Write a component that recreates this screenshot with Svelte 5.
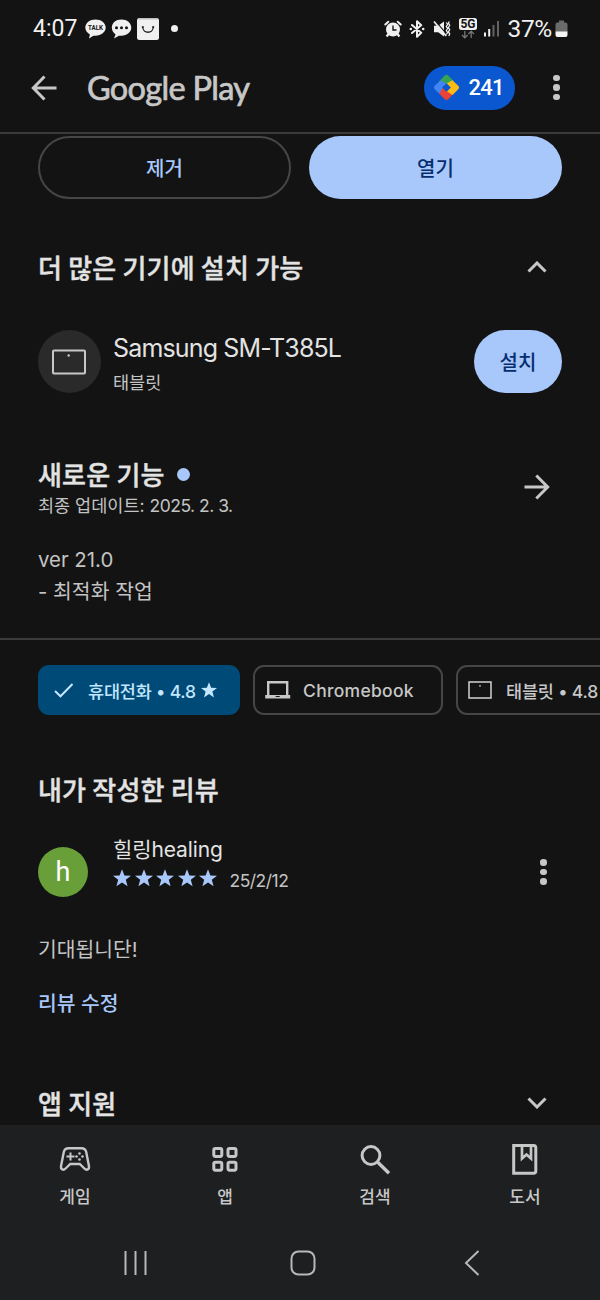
<script lang="ts">
  type Chip = { icon: 'check' | 'laptop' | 'tablet'; label: string; star: boolean; active: boolean };

  const chips: Chip[] = [
    { icon: 'check', label: '휴대전화 • 4.8', star: true, active: true },
    { icon: 'laptop', label: 'Chromebook', star: false, active: false },
    { icon: 'tablet', label: '태블릿 • 4.8', star: true, active: false },
  ];

  const tabs = [
    { id: 'games', label: '게임' },
    { id: 'apps', label: '앱' },
    { id: 'search', label: '검색' },
    { id: 'books', label: '도서' },
  ];

  const starPath = 'M9 0.2 L11.4 6.4 L18 6.7 L12.8 10.8 L14.6 17.3 L9 13.6 L3.4 17.3 L5.2 10.8 L0 6.7 L6.6 6.4 Z';

  const rating = 5;
</script>

<div class="screen">
  <header class="status-bar">
    <span class="clock">4:07</span>
    <svg class="talk" width="21" height="20" viewBox="0 0 21 20">
      <path d="M10.5 0.5C4.8 0.5 0.3 4 0.3 8.6c0 2.9 1.8 5.4 4.6 6.8l-.9 4 4.4-2.7c.7.1 1.4.1 2.1.1 5.7 0 10.2-3.6 10.2-8.2S16.2.5 10.5.5z" fill="#f0f0f0" />
      <text x="10.5" y="11.3" text-anchor="middle" textLength="15" lengthAdjust="spacingAndGlyphs">TALK</text>
    </svg>
    <svg class="dots" width="21" height="20" viewBox="0 0 21 20">
      <path d="M10.5 0.5C4.8 0.5 0.8 4 0.8 8.6c0 2.9 1.5 5.4 3.8 6.8l-1.7 4 5.1-2.7c.8.1 1.6.1 2.5.1 5.5 0 9.8-3.6 9.8-8.2S16 .5 10.5.5z" fill="#f0f0f0" />
      <circle cx="5.5" cy="8.8" r="1.5" fill="#141414" />
      <circle cx="10.5" cy="8.8" r="1.5" fill="#141414" />
      <circle cx="15.5" cy="8.8" r="1.5" fill="#141414" />
    </svg>
    <svg class="bag" width="22" height="22" viewBox="0 0 22 22">
      <rect width="22" height="22" rx="2.5" fill="#f0f0f0" />
      <rect x="1" width="20" height="1.5" fill="#bdbdbd" />
      <path d="M5.8 9c0 7 10.400 7 10.400 0" fill="none" stroke="#222" stroke-width="1.3" />
      <circle cx="5.8" cy="9" r="1.1" fill="#222" />
      <circle cx="16.2" cy="9" r="1.1" fill="#222" />
    </svg>
    <span class="more-dot"></span>

    <div class="status-right">
      <svg class="alarm" width="18" height="18" viewBox="0 0 18 18">
        <circle cx="9" cy="9.5" r="7" fill="#f0f0f0" />
        <path d="M1.3 4.5 4.3 1.8M16.700 4.5 13.700 1.8" stroke="#f0f0f0" stroke-width="2" stroke-linecap="round" />
        <path d="M4.5 14 2.6 16.500M13.500 14l1.900 2.500" stroke="#f0f0f0" stroke-width="2.200" />
        <path d="M9 5.500v4.500h3.500" fill="none" stroke="#141414" stroke-width="1.400" />
      </svg>
      <svg class="bluetooth" width="16" height="18" viewBox="0 0 16 18">
        <path d="M3 5 12.200 12.700 8 16.800V1.200l4.200 4.100L3 13" fill="none" stroke="#f0f0f0" stroke-width="2" stroke-linejoin="round" stroke-linecap="round" />
        <circle cx="1.800" cy="9" r="1.300" fill="#f0f0f0" />
        <circle cx="14.200" cy="9" r="1.300" fill="#f0f0f0" />
      </svg>
      <svg class="muted" width="18" height="18" viewBox="0 0 18 18">
        <path d="M1 5.800h4.200L11 1.500v15L5.200 12.300H1z" fill="#f0f0f0" />
        <path d="M2.500 1.200 14 14.600" stroke="#141414" stroke-width="1.200" />
        <path d="M1 1.500 13.200 16" stroke="#f0f0f0" stroke-width="1.700" />
        <path d="M13.300 2.500l1.300 2-1.300 2 1.300 2-1.300 2 1.300 2-1.300 2M16.300 1.500l-.9 1.500 1.300 2.300-1.300 2.200 1.300 2.200-1.300 2.200 1.300 2-.9 2" fill="none" stroke="#f0f0f0" stroke-width="1.300" />
      </svg>
      <svg class="five-g" width="18" height="21" viewBox="0 0 18 21">
        <rect width="18" height="12" rx="2.500" fill="#f0f0f0" />
        <text x="9" y="10" text-anchor="middle">5G</text>
        <path d="M5.800 13v6.500M3 17l2.800 2.800L8.600 17M12.200 20v-6.500M9.400 16l2.800-2.800L15 16" fill="none" stroke="#777" stroke-width="1.300" />
      </svg>
      <svg class="signal" width="16" height="17" viewBox="0 0 16 17">
        <rect x="0" y="12.500" width="2" height="4" fill="#f0f0f0" />
        <rect x="4.200" y="9" width="2" height="7.500" fill="#f0f0f0" />
        <rect x="8.500" y="5" width="2" height="11.500" fill="#626262" />
        <rect x="13" y="1" width="2" height="15.500" fill="#626262" />
      </svg>
      <span class="percent">37%</span>
      <svg width="13" height="18" viewBox="0 0 13 18">
        <path d="M4 0.500h5v2h1.500a2 2 0 0 1 2 2V12H.5V4.500a2 2 0 0 1 2-2H4z" fill="#6b6b6b" />
        <path d="M.5 11.500h12v3.500a2 2 0 0 1-2 2h-8a2 2 0 0 1-2-2z" fill="#f4f4f4" />
      </svg>
    </div>
  </header>

  <div class="app-bar">
    <svg width="26" height="26" viewBox="0 0 26 26" fill="none" stroke="#c7c7c7" stroke-width="3">
      <path d="M25.500 13H2.500M13.500 1.500 2.300 13l11.200 11.500" />
    </svg>
    <h1 class="wordmark">Google Play</h1>
    <button class="points">
      <svg width="27" height="27" viewBox="0 0 27 27">
        <path d="M13.500 .8q1 0 1.800.8l5.300 5.300-4.200 6.400-2.900-3.500-3.800 3.300-4-5.300 6-6.200q.8-.8 1.800-.8z" fill="#34a353" />
        <path d="M7.600 6.300 13.500 9.800 9.800 13.500l1.200 4.200-3.400 3.400L1.500 15q-1.400-1.500 0-3z" fill="#4285f4" />
        <path d="M6.300 19.400 9.800 13.800 13.500 17.300 16.300 14.700 20.700 19.500 15.300 25.300q-1.800 1.600-3.600 0z" fill="#ea4335" />
        <path d="M19.400 6.300 25.500 12q1.400 1.500 0 3l-6 6-5.700-3.800 3.500-3.700-3.900-3.900z" fill="#fbbc14" />
        <path d="M13.500 9.200l4.300 4.300-4.300 4.300-4.300-4.300z" fill="#0b57d0" />
      </svg>
      <span>241</span>
    </button>
    <div class="kebab"><i></i><i></i><i></i></div>
  </div>

  <main class="content">
    <div class="actions">
      <button class="outlined">제거</button>
      <button class="filled">열기</button>
    </div>

    <section class="devices-head">
      <h2>더 많은 기기에 설치 가능</h2>
      <svg width="20" height="12" viewBox="0 0 20 12"><path d="M1.500 10.500 10 2l8.500 8.500" fill="none" stroke="#c7c7c7" stroke-width="3" /></svg>
    </section>

    <section class="device">
      <div class="device-icon">
        <svg width="34" height="26" viewBox="0 0 34 26">
          <rect x="1" y="1.500" width="32" height="23" rx="1" fill="none" stroke="#c7c7c7" stroke-width="2" />
          <circle cx="16.700" cy="6.500" r="1.200" fill="#c7c7c7" />
        </svg>
      </div>
      <div class="device-text">
        <span class="device-name">Samsung SM-T385L</span>
        <span class="device-type">태블릿</span>
      </div>
      <button class="install">설치</button>
    </section>

    <section class="whats-new">
      <div class="new-text">
        <h2>새로운 기능 <span class="new-dot"></span></h2>
        <span class="updated">최종 업데이트: <span class="updated-date">2025. 2. 3.</span></span>
      </div>
      <svg width="26" height="26" viewBox="0 0 26 26" fill="none" stroke="#c7c7c7" stroke-width="3">
        <path d="M0.500 13h23M12.300 1.500 23.700 13 12.300 24.500" />
      </svg>
    </section>
    <p class="notes">ver 21.0<br />- 최적화 작업</p>

    <div class="chips">
      {#each chips as chip}
        <div class="chip {chip.icon}" class:active={chip.active}>
          {#if chip.icon === 'check'}
            <svg width="26" height="20" viewBox="0 0 26 20"><path d="M4 11 9.500 16.300 21.500 4" fill="none" stroke="#c2e7ff" stroke-width="2" /></svg>
          {:else if chip.icon === 'laptop'}
            <svg width="26" height="20" viewBox="0 0 26 20">
              <path d="M3.200 15V2.200h19V15" fill="none" stroke="#c7c7c7" stroke-width="2.400" />
              <path d="M.2 15h25v3.500H.2z" fill="#c7c7c7" />
              <path d="M10.700 16.500h4" stroke="#141414" stroke-width="1" />
            </svg>
          {:else}
            <svg width="26" height="20" viewBox="0 0 26 20">
              <rect x="1" y="2" width="22" height="16" fill="none" stroke="#c7c7c7" stroke-width="1.600" />
              <circle cx="12" cy="5.800" r=".9" fill="#c7c7c7" />
            </svg>
          {/if}
          <span>{chip.label}</span>
          {#if chip.star}
            <svg class="chip-star" width="16" height="16" viewBox="0 0 18 18"><path d={starPath} fill="currentColor" /></svg>
          {/if}
        </div>
      {/each}
    </div>

    <h2 class="my-review">내가 작성한 리뷰</h2>
    <section class="review">
      <div class="avatar">h</div>
      <div class="reviewer">
        <span class="reviewer-name">힐링healing</span>
        <div class="rating">
          {#each Array(rating) as _}
            <svg width="18" height="18" viewBox="0 0 18 18"><path d={starPath} fill="#a8c7fa" /></svg>
          {/each}
          <span class="date">25/2/12</span>
        </div>
      </div>
      <div class="kebab"><i></i><i></i><i></i></div>
    </section>
    <p class="comment">기대됩니단!</p>
    <a class="edit" href="#edit">리뷰 수정</a>

    <section class="support">
      <h2>앱 지원</h2>
      <svg width="20" height="12" viewBox="0 0 20 12"><path d="M1.500 1.500 10 10l8.500-8.500" fill="none" stroke="#c7c7c7" stroke-width="3" /></svg>
    </section>
  </main>

  <nav class="tabs">
    {#each tabs as tab}
      <div class="tab">
        <svg width="34" height="34" viewBox="0 0 34 34" fill="none" stroke="#c7c7c7" stroke-width="2.400">
          {#if tab.id === 'games'}
            <path d="M10.500 5.200h13c2.600 0 4.200 1.400 4.700 3.800l2.700 13.700c.7 4-2.300 5-4.500 2.800L21.700 21h-9.400l-4.700 4.500c-2.200 2.200-5.200 1.200-4.500-2.800L5.800 9c.5-2.400 2.100-3.800 4.700-3.800z" />
            <path d="M12.500 9.500v8M8.500 13.500h8" stroke-width="2" />
            <g fill="#c7c7c7" stroke="none">
              <circle cx="21.500" cy="10.500" r="1.300" />
              <circle cx="21.500" cy="16.500" r="1.300" />
              <circle cx="18.500" cy="13.500" r="1.300" />
              <circle cx="24.500" cy="13.500" r="1.300" />
            </g>
          {:else if tab.id === 'apps'}
            <g stroke-width="3">
              <rect x="5.800" y="5.400" width="8" height="8" rx="1.600" />
              <rect x="20" y="5.400" width="8" height="8" rx="1.600" />
              <rect x="5.800" y="19.200" width="8" height="8" rx="1.600" />
              <rect x="20" y="19.200" width="8" height="8" rx="1.600" />
            </g>
          {:else if tab.id === 'search'}
            <circle cx="13" cy="12.500" r="8.900" stroke-width="3" />
            <path d="M19.500 19 31 30.300" stroke-width="3.400" />
          {:else}
            <path d="M5.700 2.500h19.800q2.300 0 2.300 2.300v23.200q0 2.300-2.300 2.300H5.700z" stroke-width="3" />
            <path d="M14 3v12.500l4.500-4 4.500 4V3" stroke-width="2.700" />
          {/if}
        </svg>
        <span>{tab.label}</span>
      </div>
    {/each}
  </nav>

  <footer class="system-nav">
    <svg width="24" height="26" viewBox="0 0 24 26" stroke="#b8b8b8" stroke-width="2"><path d="M2.500 1v24M12.500 1v24M22.500 1v24" /></svg>
    <svg class="home" width="26" height="26" viewBox="0 0 26 26"><rect x="1.500" y="1.500" width="23" height="23" rx="7" fill="none" stroke="#b8b8b8" stroke-width="2" /></svg>
    <svg width="16" height="26" viewBox="0 0 16 26"><path d="M14.500 1 2 13l12.500 12" fill="none" stroke="#b8b8b8" stroke-width="2" /></svg>
  </footer>
</div>

<style>
  :global(body) {
    margin: 0;
    background: #131313;
  }

  .screen {
    display: flex;
    flex-direction: column;
    width: 600px;
    height: 1300px;
    overflow: hidden;
    background: #131313;
    color: #e3e3e3;
    font-family: Inter, 'Noto Sans CJK KR', sans-serif;
  }

  .screen * {
    box-sizing: border-box;
  }

  svg {
    display: block;
    flex: none;
  }

  h1,
  h2,
  p {
    margin: 0;
    white-space: nowrap;
  }

  h2 {
    font: 500 26px/38px 'Noto Sans CJK KR', sans-serif;
    letter-spacing: 0.2px;
    -webkit-text-stroke: 0.4px currentColor;
  }

  button {
    padding: 0;
    border: none;
    font: 500 20px/30px 'Noto Sans CJK KR', sans-serif;
  }

  /* status bar */
  .status-bar {
    display: flex;
    align-items: center;
    flex: none;
    height: 57px;
    padding-left: 33px;
    color: #f0f0f0;
    font-family: Roboto, sans-serif;
    font-size: 23px;
  }

  .clock {
    width: 52px;
  }

  .talk text {
    font: bold 7px Roboto, sans-serif;
    fill: #141414;
  }

  .dots {
    margin-left: 5px;
  }

  .bag {
    margin-left: 5px;
  }

  .more-dot {
    width: 7px;
    height: 7px;
    margin-left: 12px;
    border-radius: 50%;
    background: #f0f0f0;
  }

  .status-right {
    display: flex;
    align-items: center;
    margin-left: auto;
    padding-right: 32px;
  }

  .bluetooth {
    margin-left: 7px;
  }

  .muted {
    margin-left: 8px;
  }

  .five-g {
    margin: 0 7px 0 8px;
  }

  .five-g text {
    font: bold 12px Roboto, sans-serif;
    fill: #141414;
  }

  .percent {
    margin: 0 3px 0 7px;
    font-size: 24.5px;
    letter-spacing: -0.3px;
  }

  /* app bar */
  .app-bar {
    display: flex;
    align-items: center;
    flex: none;
    height: 77px;
    padding: 0 40px 14px 31px;
    border-bottom: 2px solid #3b3b3b;
  }

  .wordmark {
    margin-left: 30px;
    color: #c7c7c7;
    font: 400 32.5px/40px Lato, sans-serif;
    letter-spacing: -0.7px;
    -webkit-text-stroke: 0.7px currentColor;
  }

  .points {
    display: flex;
    align-items: center;
    gap: 9px;
    width: 91px;
    height: 44px;
    margin-left: auto;
    padding-left: 9px;
    border-radius: 22px;
    background: #0b57d0;
    color: #fff;
    font: 500 22px/30px Roboto, sans-serif;
    letter-spacing: -0.7px;
  }

  .kebab {
    display: flex;
    flex-direction: column;
    align-items: center;
    gap: 3px;
    width: 7px;
  }

  .kebab i {
    width: 6.6px;
    height: 6.6px;
    border-radius: 50%;
    background: #c7c7c7;
  }

  .app-bar .kebab {
    margin-left: 38.5px;
  }

  /* scrolled page */
  .content {
    flex: none;
    height: 991px;
    overflow: hidden;
    padding-top: 2px;
  }

  .actions {
    display: flex;
    justify-content: space-between;
    padding: 0 38px;
  }

  .actions button {
    width: 253px;
    height: 63px;
    border-radius: 32px;
  }

  .outlined {
    border: 2px solid #464646;
    background: none;
    color: #a8c7fa;
  }

  .filled,
  .install {
    background: #a8c7fa;
    color: #062e6f;
  }

  .devices-head {
    display: flex;
    align-items: center;
    justify-content: space-between;
    height: 38px;
    margin-top: 49px;
    padding: 0 53px 0 38px;
  }

  .device {
    display: flex;
    align-items: center;
    height: 63px;
    margin-top: 44px;
    padding: 0 38px;
  }

  .device-icon {
    display: flex;
    align-items: center;
    width: 63px;
    height: 63px;
    padding-left: 14px;
    border-radius: 50%;
    background: #2a2a2a;
  }

  .device-text {
    display: flex;
    flex-direction: column;
    margin: 3px 0 0 12px;
  }

  .device-name {
    font-size: 25px;
    letter-spacing: -0.85px;
    line-height: 38px;
  }

  .device-type {
    color: #c4c4c4;
    font-size: 17.5px;
    line-height: 31px;
  }

  .install {
    width: 88px;
    height: 63px;
    margin-left: auto;
    border-radius: 32px;
  }

  .whats-new {
    display: flex;
    align-items: center;
    justify-content: space-between;
    height: 66px;
    margin-top: 61px;
    padding: 0 50px 0 38px;
  }

  .new-text {
    display: flex;
    flex-direction: column;
  }

  .new-text h2 {
    display: flex;
    align-items: center;
    gap: 12px;
  }

  .new-dot {
    width: 13px;
    height: 13px;
    border-radius: 50%;
    background: #a8c7fa;
  }

  .updated {
    color: #c4c4c4;
    font-size: 17.5px;
    line-height: 26px;
  }

  .updated-date {
    letter-spacing: -0.5px;
  }

  .notes {
    height: 64px;
    margin-top: 24px;
    padding-left: 38px;
    color: #c4c4c4;
    font-size: 20.4px;
    line-height: 32px;
  }

  .chips {
    display: flex;
    gap: 13px;
    margin-top: 30px;
    padding: 25px 0 0 38px;
    border-top: 2px solid #3b3b3b;
  }

  .chip {
    display: flex;
    align-items: center;
    flex: none;
    width: 202px;
    height: 50px;
    padding-left: 10px;
    border: 2px solid #464646;
    border-radius: 11px;
    color: #c7c7c7;
    font-size: 17.5px;
    font-weight: 500;
    letter-spacing: -0.2px;
    white-space: nowrap;
  }

  .chip.active {
    padding-left: 13px;
    border: none;
    background: #004a77;
    color: #c2e7ff;
  }

  .chip.laptop {
    width: 190px;
    letter-spacing: 0.3px;
  }

  .chip span {
    margin-left: 12px;
  }

  .chip.active span {
    margin-left: 11px;
  }

  .chip-star {
    margin-left: 5px;
  }

  .my-review {
    margin-top: 55px;
    padding-left: 38px;
  }

  .review {
    display: flex;
    align-items: center;
    height: 50px;
    margin-top: 39px;
    padding: 0 53px 0 38px;
  }

  .avatar {
    width: 50px;
    height: 50px;
    border-radius: 50%;
    background: #689f38;
    color: #fff;
    font: 400 27px/51px Roboto, sans-serif;
    text-align: center;
  }

  .reviewer {
    margin: -18px auto 0 25px;
  }

  .reviewer-name {
    display: block;
    font-size: 21px;
    letter-spacing: -0.1px;
    line-height: 30px;
  }

  .rating {
    display: flex;
    align-items: center;
    gap: 3.5px;
    height: 26px;
  }

  .date {
    margin: 6px 0 0 9px;
    color: #c4c4c4;
    font-size: 17.5px;
    letter-spacing: -0.5px;
    line-height: 20px;
  }

  .comment {
    margin-top: 38px;
    padding-left: 38px;
    color: #c4c4c4;
    font-size: 20.4px;
    line-height: 30px;
  }

  .edit {
    display: block;
    margin-top: 24px;
    padding-left: 38px;
    color: #a8c7fa;
    font-size: 20.4px;
    font-weight: 500;
    line-height: 30px;
    text-decoration: none;
  }

  .support {
    display: flex;
    align-items: center;
    justify-content: space-between;
    margin-top: 65px;
    padding: 0 53px 0 38px;
  }

  /* bottom bars */
  .tabs {
    display: flex;
    flex: none;
    height: 101px;
    background: #1e1f20;
  }

  .tab {
    display: flex;
    flex: 1;
    flex-direction: column;
    align-items: center;
    padding-top: 18px;
    color: #c7c7c7;
    font-size: 17px;
    font-weight: 500;
    line-height: 28px;
  }

  .tab span {
    margin-top: 6px;
  }

  .system-nav {
    display: flex;
    align-items: center;
    justify-content: space-between;
    flex: 1;
    padding: 0 120px 0 123px;
    background: #1e1f20;
  }

  .home {
    margin-right: 5px;
  }
</style>
